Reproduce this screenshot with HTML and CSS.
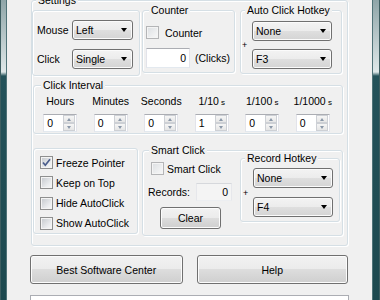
FILE: index.html
```html
<!DOCTYPE html>
<html>
  <head>
    <meta charset="utf-8">
    <title>Auto Clicker</title>
    <link rel="stylesheet" href="styles.css">
  </head>
  <body>
    <div class="window">
      <div class="edge edge-left"></div>
      <div class="client">
        <div class="group settings">
          <span class="caption">Settings</span>
          <div class="top-row">
            <div class="group mouse-panel">
              <span class="label">Mouse</span>
              <div class="combo">Left</div>
              <span class="label">Click</span>
              <div class="combo">Single</div>
            </div>
            <div class="group counter">
              <span class="caption">Counter</span>
              <div class="check counter-check"><span class="box dim"></span>Counter</div>
              <div class="counter-row">
                <div class="textbox">0</div>
                <span>(Clicks)</span>
              </div>
            </div>
            <div class="group hotkey auto-hotkey">
              <span class="caption">Auto Click Hotkey</span>
              <div class="hotkey-grid">
                <span class="plus">+</span>
                <div class="combo">None</div>
                <div class="combo">F3</div>
              </div>
            </div>
          </div>

          <div class="group interval">
            <span class="caption">Click Interval</span>
            <div class="interval-grid">
              <span>Hours</span>
              <span>Minutes</span>
              <span>Seconds</span>
              <span>1/10<small> s</small></span>
              <span>1/100<small> s</small></span>
              <span>1/1000<small> s</small></span>
              <div class="spin"><span class="val">0</span><span class="arrows"><i class="up"></i><i class="down"></i></span></div>
              <div class="spin"><span class="val">0</span><span class="arrows"><i class="up"></i><i class="down"></i></span></div>
              <div class="spin"><span class="val">0</span><span class="arrows"><i class="up"></i><i class="down"></i></span></div>
              <div class="spin"><span class="val">1</span><span class="arrows"><i class="up"></i><i class="down"></i></span></div>
              <div class="spin"><span class="val">0</span><span class="arrows"><i class="up"></i><i class="down"></i></span></div>
              <div class="spin"><span class="val">0</span><span class="arrows"><i class="up"></i><i class="down"></i></span></div>
            </div>
          </div>

          <div class="bottom-row">
            <div class="group options">
              <div class="check">
                <span class="box"><svg width="11" height="11" viewBox="0 0 11 11"><path d="M2 5.5 L4.3 8.2 L9 2.2" fill="none" stroke="#4a5d8c" stroke-width="1.7"/></svg></span>Freeze Pointer
              </div>
              <div class="check"><span class="box"></span>Keep on Top</div>
              <div class="check"><span class="box"></span>Hide AutoClick</div>
              <div class="check"><span class="box"></span>Show AutoClick</div>
            </div>
            <div class="group smart">
              <span class="caption">Smart Click</span>
              <div class="smart-body">
                <div class="smart-left">
                  <div class="check smart-check"><span class="box dim"></span>Smart Click</div>
                  <div class="records-row">
                    <span class="records-label">Records:</span>
                    <div class="textbox readonly">0</div>
                  </div>
                  <button class="button clear">Clear</button>
                </div>
                <div class="group hotkey record-hotkey">
                  <span class="caption">Record Hotkey</span>
                  <div class="hotkey-grid">
                    <span class="plus">+</span>
                    <div class="combo">None</div>
                    <div class="combo">F4</div>
                  </div>
                </div>
              </div>
            </div>
          </div>
        </div>

        <div class="buttons">
          <button class="button wide-btn">Best Software Center</button>
          <button class="button help-btn">Help</button>
        </div>
        <div class="status"></div>
      </div>
      <div class="edge edge-right"></div>
    </div>
  </body>
</html>
```

FILE: styles.css
```css
* {
  box-sizing: border-box;
}

body {
  margin: 0;
  font: 10.5px/12px "Liberation Sans", Arial, sans-serif;
  color: #000;
  background: #f0f0f0;
}

.window {
  display: flex;
  width: 380px;
  height: 300px;
  overflow: hidden;
}

/* aero frame edges */
.edge {
  flex: 0 0 auto;
  background: linear-gradient(#8fa5a8 0, #dfe8e9 72px, #24525a 76px, #1d494f 100%);
}

.edge-left {
  width: 7px;
  box-shadow: inset 1px 0 #3d5d60, inset -1px 0 #4f7277;
}

.edge-right {
  width: 8px;
  box-shadow: inset 1px 0 #4f7277, inset -1px 0 #3d5d60;
}

.client {
  width: 365px;
  padding: 0 24px;
  background: #f0f0f0;
}

/* group boxes */
.group {
  border: 1px solid #d5dfe5;
  border-radius: 3px;
  box-shadow: inset 1px 1px #fff, 1px 1px #fff;
}

.caption {
  display: block;
  width: max-content;
  height: 12px;
  margin-top: -7px;
  padding: 0 2px;
  background: #f0f0f0;
}

.settings {
  height: 246px;
}

.settings > .caption {
  margin-left: 4px;
}

.top-row,
.bottom-row {
  display: flex;
  align-items: flex-start;
}

.mouse-panel {
  margin-top: 4px;
  width: 108px;
  height: 66px;
  padding: 9px 0 0 4px;
  display: grid;
  grid-template-columns: 35px 61px;
  grid-template-rows: 20px 20px;
  row-gap: 9px;
  align-items: center;
}

.counter {
  margin: 4px 0 0 2px;
  width: 93px;
  height: 63px;
  padding-left: 3px;
}

.counter .caption {
  margin-left: 3px;
}

.counter-check {
  margin-top: 10px;
}

.counter-check .box {
  margin-right: 6px;
}

.counter-row {
  display: flex;
  align-items: center;
  margin-top: 9px;
  gap: 5px;
}

.textbox {
  width: 44px;
  height: 20px;
  padding-right: 3px;
  border: 1px solid;
  border-color: #abadb3 #e2e3ea #e3e9ef #e2e3ea;
  background: #fff;
  text-align: right;
  line-height: 18px;
}

.textbox.readonly {
  width: 36px;
  height: 18px;
  line-height: 16px;
  background: #f4f4f4;
  border-color: #d6d8dc #e6e7eb #eceef1 #e6e7eb;
}

.hotkey .caption {
  margin-left: 4px;
}

.auto-hotkey {
  margin: 4px 0 0 5px;
  width: 102px;
  height: 64px;
}

.hotkey-grid {
  display: grid;
  grid-template-columns: 10px 80px;
  grid-template-rows: 20px 20px;
  row-gap: 8px;
  padding: 5px 0 0 1px;
}

.record-hotkey .hotkey-grid {
  row-gap: 9px;
  padding: 4px 0 0 2px;
}

.plus {
  grid-row: 1 / 3;
  align-self: center;
  font-size: 9px;
}

.combo {
  height: 20px;
  display: flex;
  align-items: center;
  justify-content: space-between;
  padding: 0 5px 0 3px;
  border: 1px solid #707070;
  border-radius: 3px;
  background: linear-gradient(#f3f3f3, #ececec 50%, #dfdfdf 50%, #d4d4d4);
  box-shadow: inset 0 0 0 1px #fbfbfb;
}

.combo::after {
  content: "";
  border-left: 3.5px solid transparent;
  border-right: 3.5px solid transparent;
  border-top: 4px solid #000;
}

/* click interval */
.interval {
  margin: 9px 0 0 1px;
  width: 310px;
  height: 49px;
}

.interval .caption {
  margin-left: 7px;
}

.interval-grid {
  display: grid;
  grid-template-columns: repeat(6, 50.5px);
  row-gap: 5px;
  justify-items: center;
  padding: 4px 0 0 1px;
}

.interval-grid small {
  font-size: 8px;
}

.spin {
  display: flex;
  width: 34px;
  height: 18px;
  border: 1px solid;
  border-color: #abadb3 #e2e3ea #e3e9ef #e2e3ea;
  background: #fff;
}

.spin .val {
  flex: 1;
  padding-left: 3px;
  line-height: 16px;
}

.spin .arrows {
  width: 13px;
  padding: 0 1px 0 0;
  display: flex;
  flex-direction: column;
}

.spin .arrows i {
  flex: 1;
  display: flex;
  align-items: center;
  justify-content: center;
  border: 1px solid #cdd0d5;
  background: linear-gradient(#f6f6f6, #e6e6e6);
}

.spin .arrows i::after {
  content: "";
  border-left: 2.5px solid transparent;
  border-right: 2.5px solid transparent;
}

.spin .up::after {
  border-bottom: 3px solid #8a97a8;
}

.spin .down::after {
  border-top: 3px solid #8a97a8;
}

/* checkboxes */
.check {
  display: flex;
  align-items: center;
  height: 13px;
}

.box {
  width: 13px;
  height: 13px;
  margin-right: 3px;
  padding: 0;
  display: flex;
  border: 1px solid #8e8f8f;
  background: linear-gradient(135deg, #c3c7cc, #eceef0 70%, #f7f7f7);
  box-shadow: inset 0 0 0 1px #f4f4f4;
}

.box.dim {
  border-color: #b4b5b7;
  background: linear-gradient(135deg, #dcdfe2, #f0f1f2 70%, #f7f7f7);
}

.options {
  margin: 14px 0 0 1px;
  width: 105px;
  height: 86px;
  padding: 7px 0 0 6px;
  display: flex;
  flex-direction: column;
  gap: 7.33px;
}

.smart {
  margin: 16px 0 0 4px;
  width: 201px;
  height: 86px;
}

.smart > .caption {
  margin-left: 6px;
}

.smart-body {
  display: flex;
  align-items: flex-start;
}

.smart-left {
  width: 97px;
}

.smart-check {
  margin: 6px 0 0 8px;
}

.records-row {
  display: flex;
  align-items: center;
  margin-top: 8px;
  padding-left: 5px;
}

.records-label {
  width: 48px;
}

.record-hotkey {
  margin-top: 2px;
  width: 100px;
  height: 64px;
}

/* push buttons */
.button {
  display: flex;
  align-items: center;
  justify-content: center;
  padding: 0;
  font: inherit;
  color: #000;
  border: 1px solid #707070;
  border-radius: 3px;
  background: linear-gradient(#f2f2f2, #ebebeb 50%, #dddddd 50%, #cfcfcf);
  box-shadow: inset 0 0 0 1px #fcfcfc;
}

.clear {
  margin: 6px 0 0 17px;
  width: 61px;
  height: 22px;
}

.buttons {
  display: flex;
  margin: 9px 0 0 -1px;
}

.wide-btn {
  width: 153px;
  height: 29px;
}

.help-btn {
  margin-left: 14px;
  width: 152px;
  height: 29px;
}

.status {
  margin: 11px 0 0 -1px;
  width: 319px;
  height: 20px;
  border: 1px solid #abadb3;
  background: #fff;
}
```
